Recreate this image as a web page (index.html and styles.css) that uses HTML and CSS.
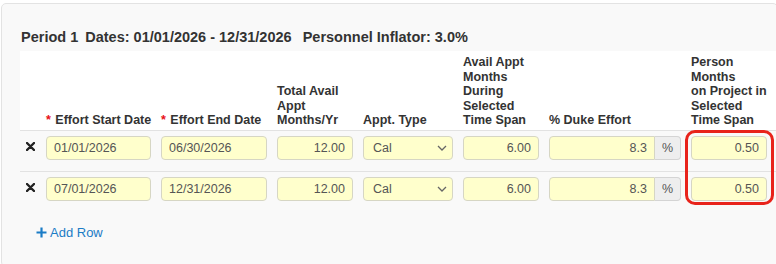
FILE: index.html
```html
<!DOCTYPE html>
<html lang="en">
<head>
  <meta charset="UTF-8">
  <title>Effort Periods</title>
  <link rel="stylesheet" href="styles.css">
</head>
<body>
  <div class="panel">
    <h3 class="period-title">
      <span>Period 1</span>
      <span class="gap-sm">Dates: 01/01/2026 - 12/31/2026</span>
      <span class="gap-lg">Personnel Inflator: 3.0%</span>
    </h3>

    <div class="table-wrap">
      <table class="effort-table">
        <colgroup>
          <col class="c-del">
          <col class="c-date">
          <col class="c-date2">
          <col class="c-num">
          <col class="c-type">
          <col class="c-num">
          <col class="c-pct">
          <col>
        </colgroup>
        <thead>
          <tr>
            <th></th>
            <th><span class="req">*</span> Effort Start Date</th>
            <th><span class="req">*</span> Effort End Date</th>
            <th>Total Avail<br>Appt<br>Months/Yr</th>
            <th>Appt. Type</th>
            <th>Avail Appt<br>Months<br>During<br>Selected<br>Time Span</th>
            <th>% Duke Effort</th>
            <th>Person<br>Months<br>on Project in<br>Selected<br>Time Span</th>
          </tr>
        </thead>
        <tbody>
          <tr>
            <td><button class="del-btn" title="Remove">
              <svg width="9" height="9" viewBox="0 0 9 9"><path d="M1 1L8 8M8 1L1 8" stroke="#222" stroke-width="2.4" stroke-linecap="round"/></svg>
            </button></td>
            <td><input class="field" type="text" value="01/01/2026"></td>
            <td><input class="field" type="text" value="06/30/2026"></td>
            <td><input class="field num" type="text" value="12.00"></td>
            <td><div class="select-wrap"><select class="field"><option>Cal</option></select>
              <svg class="chev" width="10" height="6" viewBox="0 0 10 6"><path d="M1 1L5 5L9 1" fill="none" stroke="#666" stroke-width="1.3"/></svg></div></td>
            <td><input class="field num" type="text" value="6.00"></td>
            <td><div class="input-group"><input class="field num" type="text" value="8.3"><span class="addon">%</span></div></td>
            <td><input class="field num" type="text" value="0.50"></td>
          </tr>
          <tr>
            <td><button class="del-btn" title="Remove">
              <svg width="9" height="9" viewBox="0 0 9 9"><path d="M1 1L8 8M8 1L1 8" stroke="#222" stroke-width="2.4" stroke-linecap="round"/></svg>
            </button></td>
            <td><input class="field" type="text" value="07/01/2026"></td>
            <td><input class="field" type="text" value="12/31/2026"></td>
            <td><input class="field num" type="text" value="12.00"></td>
            <td><div class="select-wrap"><select class="field"><option>Cal</option></select>
              <svg class="chev" width="10" height="6" viewBox="0 0 10 6"><path d="M1 1L5 5L9 1" fill="none" stroke="#666" stroke-width="1.3"/></svg></div></td>
            <td><input class="field num" type="text" value="6.00"></td>
            <td><div class="input-group"><input class="field num" type="text" value="8.3"><span class="addon">%</span></div></td>
            <td><input class="field num" type="text" value="0.50"></td>
          </tr>
        </tbody>
      </table>
      <!-- highlight around the person months column -->
      <div class="highlight"></div>
    </div>

    <a class="add-row" href="#">
      <svg width="11" height="11" viewBox="0 0 11 11"><path d="M5.5 0.5V10.5M0.5 5.5H10.5" stroke="#1b7cc6" stroke-width="2.2"/></svg>
      Add Row
    </a>
  </div>
</body>
</html>
```

FILE: styles.css
```css
body {
  margin: 0;
  padding: 0;
  background-color: #fff;
  font-family: "Liberation Sans", Arial, sans-serif;
  color: #333;
  overflow: hidden;
}
.panel {
  margin: 3px 0 0 1px;
  width: 777px;
  height: 264px;
  background-color: #f9f9f9;
  border: 1px solid #e3e3e3;
  border-radius: 5px;
  padding: 23px 0 0 18px;
  box-sizing: border-box;
}
.period-title {
  margin: 0 0 4px;
  padding-left: 1px;
  font-size: 14.5px;
  line-height: 20px;
  font-weight: bold;
  color: #333;
}
.gap-sm {
  margin-left: 3px;
}
.gap-lg {
  margin-left: 7px;
}
.table-wrap {
  position: relative;
}
.effort-table {
  border-collapse: collapse;
  table-layout: fixed;
  width: 757px;
}
.c-del { width: 21px; }
.c-date { width: 115px; }
.c-date2 { width: 116px; }
.c-num { width: 86px; }
.c-type { width: 100px; }
.c-pct { width: 142px; }
.effort-table thead th {
  background-color: #fff;
  text-align: left;
  vertical-align: bottom;
  white-space: nowrap;
  font-size: 12.5px;
  line-height: 14.5px;
  font-weight: bold;
  color: #333;
  padding: 4px 5px 2px;
  border-bottom: 1px solid #e2e2e2;
}
.req {
  color: #e8101a;
  margin-right: 1px;
}
.effort-table tbody td {
  vertical-align: top;
  padding: 5px 5px 11px;
  border-top: 1px solid #e2e2e2;
}
.effort-table tbody tr:first-child td {
  border-top: none;
}
.effort-table tbody td:first-child {
  padding-left: 6px;
  padding-right: 0;
}
.effort-table tbody td:last-child {
  padding-right: 10px;
}
.del-btn {
  border: none;
  background: none;
  padding: 0;
  margin-top: 3px;
  cursor: pointer;
  display: block;
}
.field {
  display: block;
  width: 100%;
  height: 24px;
  box-sizing: border-box;
  background-color: #ffffcc;
  border: 1px solid #d6d6c4;
  border-radius: 4px;
  padding: 0 7px;
  font-family: "Liberation Sans", Arial, sans-serif;
  font-size: 12.5px;
  color: #555;
  outline: none;
}
.field.num {
  text-align: right;
}
.select-wrap {
  position: relative;
}
.select-wrap select {
  appearance: none;
  -webkit-appearance: none;
  padding-left: 9px;
}
.chev {
  position: absolute;
  right: 6px;
  top: 9px;
  pointer-events: none;
}
.input-group {
  display: flex;
}
.input-group .field {
  flex: 1;
  border-radius: 4px 0 0 4px;
  min-width: 0;
}
.addon {
  width: 26px;
  height: 24px;
  box-sizing: border-box;
  background-color: #eee;
  border: 1px solid #d4d4d4;
  border-left: none;
  border-radius: 0 4px 4px 0;
  display: flex;
  align-items: center;
  justify-content: center;
  font-size: 12.5px;
  color: #555;
}
.highlight {
  position: absolute;
  left: 665px;
  top: 79px;
  width: 89px;
  height: 75px;
  box-sizing: border-box;
  border: 3px solid #e8231b;
  border-radius: 10px;
  pointer-events: none;
}
.add-row {
  display: inline-flex;
  align-items: center;
  gap: 3px;
  margin: 13px 0 0 16px;
  font-size: 13px;
  line-height: 16px;
  color: #1b7cc6;
  text-decoration: none;
}
```
